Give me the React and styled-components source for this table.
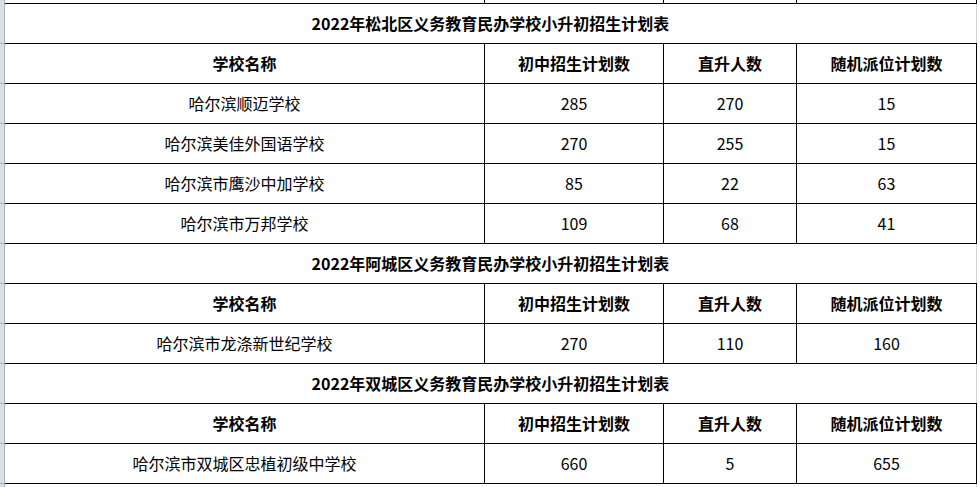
import React from "react";
import styled, { createGlobalStyle } from "styled-components";

const GlobalStyle = createGlobalStyle`
  html, body { margin: 0; padding: 0; background: #ffffff; }
  body {
    font-family: "Noto Sans CJK SC", "Noto Sans", sans-serif;
    color: #000;
  }
`;

const COLS = [480, 179, 133, 180];

const Page = styled.div`
  display: flex;
  width: 980px;
  height: 487px;
  overflow: hidden;
  background: #fff;
`;

const Gutter = styled.div`
  flex: 0 0 5px;
  box-sizing: border-box;
  border-right: 1px solid #aab1b9;
  background-color: #dadfe5;
  background-image: repeating-linear-gradient(
    to bottom,
    transparent 0 39px,
    #aab1b9 39px 40px
  );
  background-position: 0 4px;
`;

const Sheet = styled.div`
  width: 972px;
  display: flex;
  flex-direction: column;
`;

const Stub = styled.div`
  display: flex;
  height: 3px;
  flex: 0 0 3px;
`;

const StubCell = styled.div`
  box-sizing: border-box;
  width: ${(p) => p.$w}px;
  border-right: 1px solid ${(p) => (p.$light ? "#d4d4d4" : "#000")};
`;

const Row = styled.div`
  display: flex;
  box-sizing: border-box;
  flex: 0 0 ${(p) => (p.$last ? 41 : 40)}px;
  height: ${(p) => (p.$last ? 41 : 40)}px;
  border-top: 1px solid #000;
  border-bottom: ${(p) => (p.$last ? "1px solid #000" : "none")};
`;

const Cell = styled.div`
  box-sizing: border-box;
  width: ${(p) => p.$w}px;
  border-right: 1px solid #000;
  display: flex;
  align-items: center;
  justify-content: center;
  padding-bottom: 2px;
  font-size: 16px;
  line-height: 1;
  font-weight: ${(p) => (p.$bold ? 700 : 400)};
  white-space: nowrap;
`;

const TitleCell = styled.div`
  box-sizing: border-box;
  flex: 1;
  border-right: 1px solid #d4d4d4;
  display: flex;
  align-items: center;
  justify-content: center;
  padding-bottom: 2px;
  font-size: 16px;
  line-height: 1;
  font-weight: 700;
  white-space: nowrap;
`;

const HEADERS = ["学校名称", "初中招生计划数", "直升人数", "随机派位计划数"];

const TABLES = [
  {
    title: "2022年松北区义务教育民办学校小升初招生计划表",
    rows: [
      ["哈尔滨顺迈学校", "285", "270", "15"],
      ["哈尔滨美佳外国语学校", "270", "255", "15"],
      ["哈尔滨市鹰沙中加学校", "85", "22", "63"],
      ["哈尔滨市万邦学校", "109", "68", "41"],
    ],
  },
  {
    title: "2022年阿城区义务教育民办学校小升初招生计划表",
    rows: [["哈尔滨市龙涤新世纪学校", "270", "110", "160"]],
  },
  {
    title: "2022年双城区义务教育民办学校小升初招生计划表",
    rows: [["哈尔滨市双城区忠植初级中学校", "660", "5", "655"]],
  },
];

export default function App() {
  return (
    <>
      <GlobalStyle />
      <Page>
        <Gutter />
        <Sheet>
          <Stub>
            {COLS.map((w, i) => (
              <StubCell key={i} $w={w} />
            ))}
          </Stub>
          {TABLES.map((t, ti) => (
            <React.Fragment key={ti}>
              <Row>
                <TitleCell>{t.title}</TitleCell>
              </Row>
              <Row>
                {HEADERS.map((h, i) => (
                  <Cell key={i} $w={COLS[i]} $bold>
                    {h}
                  </Cell>
                ))}
              </Row>
              {t.rows.map((r, ri) => (
                <Row
                  key={ri}
                  $last={ti === TABLES.length - 1 && ri === t.rows.length - 1}
                >
                  {r.map((v, i) => (
                    <Cell key={i} $w={COLS[i]}>
                      {v}
                    </Cell>
                  ))}
                </Row>
              ))}
            </React.Fragment>
          ))}
          <Stub>
            <StubCell $w={972} $light />
          </Stub>
        </Sheet>
      </Page>
    </>
  );
}
